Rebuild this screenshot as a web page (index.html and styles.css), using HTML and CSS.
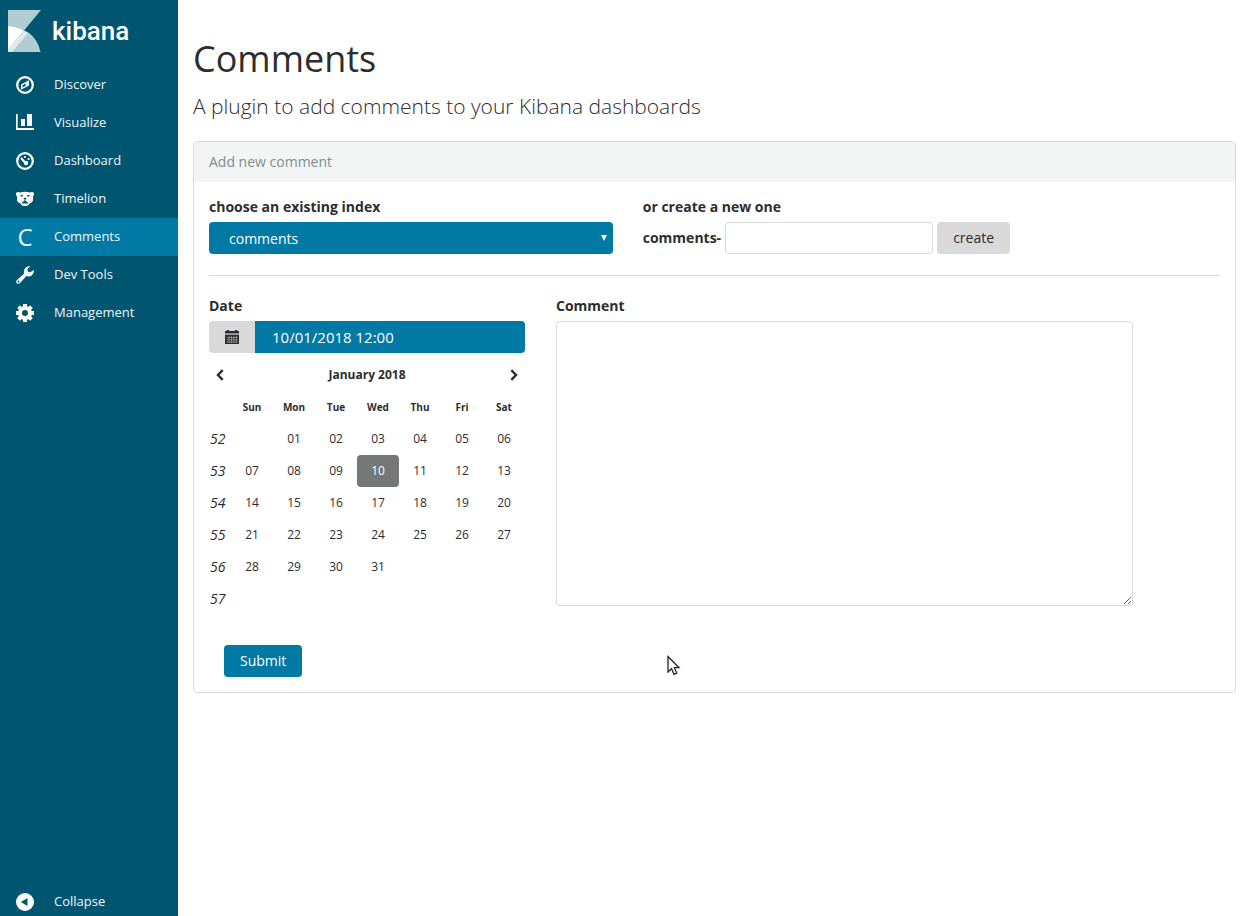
FILE: index.html
```html
<!DOCTYPE html>
<html lang="en">
<head>
<meta charset="utf-8">
<title>Comments - Kibana</title>
<link rel="stylesheet" href="styles.css">
</head>
<body>
<div class="app">
  <nav class="sidebar" aria-label="Main">
    <a class="logo" href="#">
      <svg class="logo-mark" viewBox="0 0 33 42" width="33" height="42" aria-hidden="true">
        <path fill="#b2ccd4" d="M0 0H33L16 20.500Q8.500 16 0 16Z"/>
        <path fill="#b2ccd4" d="M20.500 22.500Q30 29.500 32.500 42H5Z"/>
        <path fill="#dde9ea" d="M16 20.500Q18.500 21.300 20.500 23L5 42H0V39Z"/>
        <path fill="#fff" d="M0 16Q8.500 16 16 20.500L0 39.500Z"/>
      </svg>
      <span class="logo-name">kibana</span>
    </a>
    <ul class="nav-list">
      <li><a class="nav-link" href="#">
        <svg class="nav-icon" viewBox="0 0 18 18" aria-hidden="true"><circle cx="9" cy="9" r="7.800" fill="none" stroke="#fff" stroke-width="2.200"/><path fill="#fff" fill-rule="evenodd" d="M13 4.200v5.200L5 13.800V8.600ZM9.600 7.400 6.600 9.300v2.200l3-1.700Z"/></svg>
        <span class="nav-text">Discover</span></a></li>
      <li><a class="nav-link" href="#">
        <svg class="nav-icon" viewBox="0 0 18 18" aria-hidden="true"><path fill="#fff" d="M0 0h1.700v14H18v2H0ZM5 5h4v7H5ZM11 0h5v12H11Z"/></svg>
        <span class="nav-text">Visualize</span></a></li>
      <li><a class="nav-link" href="#">
        <svg class="nav-icon" viewBox="0 0 18 18" aria-hidden="true"><circle cx="9" cy="9" r="7.800" fill="none" stroke="#fff" stroke-width="2.200"/><path stroke="#fff" stroke-width="2" d="m5 6 4.500 5"/><circle cx="10" cy="11" r="2.200" fill="#fff"/><circle cx="9" cy="5" r="1" fill="#fff"/><circle cx="12.600" cy="7" r="1.100" fill="#fff"/></svg>
        <span class="nav-text">Dashboard</span></a></li>
      <li><a class="nav-link" href="#">
        <svg class="nav-icon" viewBox="0 0 18 18" aria-hidden="true"><path fill="#fff" d="M0 3Q1.500 1.500 4 2.400Q9 1.200 14 2.400Q16.500 1.500 18 3Q18.300 5.200 17 6.500V10.500Q16.500 12.700 13.500 13.500Q12.500 16 9 16T4.500 13.500Q1.500 12.700 1 10.500V6.500Q-.3 5.200 0 3Z"/><path fill="#005571" d="M4.500 5h2.300v1.400H4.500ZM11.200 5h2.300v1.400H11.200ZM7.300 7.800h3.400L9.500 9.600v1.200L12 12.500v1H6v-1l2.500-1.700V9.600Z"/></svg>
        <span class="nav-text">Timelion</span></a></li>
      <li><a class="nav-link active" href="#" aria-current="page">
        <span class="nav-icon nav-letter" aria-hidden="true">C</span>
        <span class="nav-text">Comments</span></a></li>
      <li><a class="nav-link" href="#">
        <svg class="nav-icon" viewBox="0 0 18 18" aria-hidden="true"><path fill="#fff" fill-rule="evenodd" d="M14.500.4 11.600 2.500v2.800L14 6.400l3.700-2.300Q18.300 7.300 16 9.200T10.400 10L4 17Q2.300 18.500.8 17.200T1 14L8 7.700Q7.300 4.200 9.300 2T14.500.4ZM2.500 14.600a.9.900 0 1 0 .1 0Z"/></svg>
        <span class="nav-text">Dev Tools</span></a></li>
      <li><a class="nav-link" href="#">
        <svg class="nav-icon" viewBox="0 0 18 18" aria-hidden="true"><circle cx="9" cy="9" r="5" fill="none" stroke="#fff" stroke-width="4"/><path stroke="#fff" stroke-width="4" d="M9 0v4M9 14v4M0 9h4M14 9h4M2.600 2.600l3 3M12.400 12.400l3 3M2.600 15.400l3-3M12.400 5.600l3-3"/></svg>
        <span class="nav-text">Management</span></a></li>
    </ul>
    <button class="nav-link collapse" type="button">
      <svg class="nav-icon" viewBox="0 0 18 18" aria-hidden="true"><circle cx="9" cy="9" r="9" fill="#fff"/><path fill="#005571" d="M4.800 9 11.500 5v8Z"/></svg>
      <span class="nav-text">Collapse</span>
    </button>
  </nav>

  <main class="content">
    <h1 class="title">Comments</h1>
    <p class="subtitle">A plugin to add comments to your Kibana dashboards</p>

    <section class="panel">
      <h2 class="panel-heading">Add new comment</h2>
      <form class="panel-body">
        <div class="row">
          <div class="col-5">
            <label class="label" for="index">choose an existing index</label>
            <div class="select-wrap">
              <select class="select" id="index"><option>comments</option></select>
              <svg class="select-arrow" viewBox="0 0 6 6" aria-hidden="true"><path fill="#fff" d="M0 0h6L3 6Z"/></svg>
            </div>
          </div>
          <div class="col-7">
            <span class="label">or create a new one</span>
            <div class="create-row">
              <label class="prefix" for="new-index">comments-</label>
              <input class="text-input" id="new-index" type="text">
              <button class="button button-plain" type="button">create</button>
            </div>
          </div>
        </div>
        <hr class="divider">
        <div class="row">
          <div class="col-4">
            <label class="label" for="date">Date</label>
            <div class="date-group">
              <button class="date-toggle" type="button" aria-label="Toggle calendar">
                <svg viewBox="0 0 14 14" width="14" height="14" aria-hidden="true"><path fill="#2d2d2d" d="M0 1h2V0h2v1h6V0h2v1h2V3.500H0ZM0 5h14v9H0Z"/><path fill="#9a9aa2" d="M0 3.500h14V5H0Z"/><path stroke="#b4b4b4" stroke-width=".6" d="M1.500 7.500h11M1.500 9.700h11M1.500 12h11M4 6v7M6.500 6v7M9 6v7M11.500 6v7"/></svg>
              </button>
              <input class="date-input" id="date" type="text" value="10/01/2018 12:00">
            </div>
            <div class="calendar">
              <div class="calendar-head">
                <button class="month-step" type="button" aria-label="Previous month"><svg viewBox="0 0 8 12" width="8" height="12" aria-hidden="true"><path fill="none" stroke="#2d2d2d" stroke-width="2.400" d="M6.700 1.200 2 6l4.700 4.800"/></svg></button>
                <strong>January 2018</strong>
                <button class="month-step" type="button" aria-label="Next month"><svg viewBox="0 0 8 12" width="8" height="12" aria-hidden="true"><path fill="none" stroke="#2d2d2d" stroke-width="2.400" d="M1.300 1.200 6 6l-4.700 4.800"/></svg></button>
              </div>
              <table class="days">
                <thead><tr><td></td><th>Sun</th><th>Mon</th><th>Tue</th><th>Wed</th><th>Thu</th><th>Fri</th><th>Sat</th></tr></thead>
                <tbody>
                  <tr><td class="week">52</td><td></td><td><button class="day" type="button">01</button></td><td><button class="day" type="button">02</button></td><td><button class="day" type="button">03</button></td><td><button class="day" type="button">04</button></td><td><button class="day" type="button">05</button></td><td><button class="day" type="button">06</button></td></tr>
                  <tr><td class="week">53</td><td><button class="day" type="button">07</button></td><td><button class="day" type="button">08</button></td><td><button class="day" type="button">09</button></td><td><button class="day selected" type="button">10</button></td><td><button class="day" type="button">11</button></td><td><button class="day" type="button">12</button></td><td><button class="day" type="button">13</button></td></tr>
                  <tr><td class="week">54</td><td><button class="day" type="button">14</button></td><td><button class="day" type="button">15</button></td><td><button class="day" type="button">16</button></td><td><button class="day" type="button">17</button></td><td><button class="day" type="button">18</button></td><td><button class="day" type="button">19</button></td><td><button class="day" type="button">20</button></td></tr>
                  <tr><td class="week">55</td><td><button class="day" type="button">21</button></td><td><button class="day" type="button">22</button></td><td><button class="day" type="button">23</button></td><td><button class="day" type="button">24</button></td><td><button class="day" type="button">25</button></td><td><button class="day" type="button">26</button></td><td><button class="day" type="button">27</button></td></tr>
                  <tr><td class="week">56</td><td><button class="day" type="button">28</button></td><td><button class="day" type="button">29</button></td><td><button class="day" type="button">30</button></td><td><button class="day" type="button">31</button></td><td></td><td></td><td></td></tr>
                  <tr><td class="week">57</td><td></td><td></td><td></td><td></td><td></td><td></td><td></td></tr>
                </tbody>
              </table>
            </div>
          </div>
          <div class="col-7">
            <label class="label" for="comment">Comment</label>
            <textarea class="comment" id="comment"></textarea>
          </div>
        </div>
        <div class="actions"><button class="button button-primary" type="button">Submit</button></div>
      </form>
    </section>
  </main>
</div>
<svg class="pointer" viewBox="0 0 14 21" width="14" height="21" aria-hidden="true"><path fill="#fff" stroke="#20262d" stroke-width="1.300" d="M1 1.500V17l3.600-3.300L7 19.300l2.800-1.200-2.400-5.400H12Z"/></svg>
</body>
</html>
```

FILE: styles.css
```css
* { box-sizing: border-box; }

body {
  margin: 0;
  font-family: "Open Sans", "Noto Sans", sans-serif;
  font-size: 14px;
  line-height: 20px;
  color: #2d2d2d;
  background: #fff;
}

button, input, select, textarea { font: inherit; color: inherit; }
button { cursor: pointer; }

.app { display: flex; min-height: 100vh; }

/* Sidebar */
.sidebar {
  display: flex;
  flex-direction: column;
  flex: 0 0 178px;
  background: #005571;
  color: #fff;
}
.logo {
  display: flex;
  align-items: center;
  gap: 11px;
  height: 66px;
  padding: 0 8px 4px;
  color: #fff;
  text-decoration: none;
}
.logo-name {
  font-family: Roboto, "Open Sans", sans-serif;
  font-size: 26px;
  font-weight: 500;
  line-height: 32px;
}
.nav-list { margin: 0; padding: 0; list-style: none; }
.nav-link {
  display: flex;
  align-items: center;
  gap: 20px;
  width: 100%;
  height: 38px;
  padding: 0 16px;
  border: 0;
  background: none;
  font-size: 13px;
  color: #f0f5f7;
  text-align: left;
  text-decoration: none;
}
.nav-link.active { background: #0079a5; }
.nav-icon { flex: none; width: 18px; height: 18px; }
.nav-letter { font-size: 24px; line-height: 18px; text-align: center; }
.nav-text { padding-bottom: 2px; }
.collapse { height: 28px; margin-top: auto; }

/* Page */
.content { flex: 1; min-width: 0; padding: 39px 18px 20px 15px; }
.title { margin: 0; font-size: 36px; font-weight: 400; line-height: 40px; }
.subtitle { margin: 13px 0 20px; font-size: 21px; font-weight: 300; line-height: 29px; }

.panel { border: 1px solid #d9d9d9; border-radius: 4px; }
.panel-heading {
  margin: 0;
  padding: 10px 15px;
  background: #f3f5f5;
  border-radius: 3px 3px 0 0;
  font-size: 14px;
  font-weight: 400;
  color: #7b8e8e;
}
.panel-body { padding: 15px; }

.row { display: flex; margin: 0 -15px; }
.col-4, .col-5, .col-7 { padding: 0 15px; }
.col-4 { width: 33.333%; }
.col-5 { width: 41.667%; }
.col-7 { width: 58.333%; }

.label { display: block; margin-bottom: 5px; font-weight: 700; }
.divider { margin: 21px 0 20px; border: 0; border-top: 1px solid #d9d9d9; }

/* Controls */
.select-wrap { position: relative; }
.select {
  display: block;
  width: 100%;
  height: 32px;
  padding: 1px 20px 0;
  border: 0;
  border-radius: 4px;
  background: #0079a5;
  color: #fff;
  appearance: none;
}
.select-arrow {
  position: absolute;
  top: 13px;
  right: 6px;
  width: 6px;
  height: 6px;
  pointer-events: none;
}
.create-row { display: flex; align-items: center; gap: 4px; }
.prefix { font-weight: 700; }
.text-input {
  width: 208px;
  height: 32px;
  padding: 5px 15px;
  border: 1px solid #d9d9d9;
  border-radius: 4px;
  background: #fff;
}
.button { height: 32px; padding: 0 16px; border: 0; border-radius: 4px; }
.button-plain { background: #d9d9d9; }
.button-primary { background: #0079a5; color: #fff; }
.actions { padding: 30px 15px 0; }

.date-group,
.calendar { max-width: 316px; }
.date-group { display: flex; height: 32px; border-radius: 4px; overflow: hidden; }
.date-toggle {
  display: flex;
  align-items: center;
  justify-content: center;
  flex: 0 0 46px;
  padding: 0;
  border: 0;
  background: #d9d9d9;
}
.date-input {
  flex: 1;
  min-width: 0;
  padding: 0 17px;
  border: 0;
  background: #0079a5;
  color: #fff;
  font-size: 15px;
}

.comment {
  display: block;
  width: 100%;
  height: 285px;
  padding: 5px 15px;
  border: 1px solid #d9d9d9;
  border-radius: 4px;
  background: #fff;
  resize: both;
}

/* Calendar */
.calendar { padding-top: 6px; }
.calendar-head {
  display: flex;
  align-items: center;
  justify-content: space-between;
  height: 32px;
  font-size: 12px;
}
.month-step { display: flex; padding: 0 7px; border: 0; background: none; }
.days { width: 100%; border-collapse: collapse; table-layout: fixed; }
.days th, .days td { height: 32px; padding: 0; text-align: center; }
.days th { font-size: 10px; }
.days td:first-child { width: 22px; }
.days .week { padding-left: 1px; font-style: italic; text-align: left; }
.day {
  display: block;
  width: 100%;
  height: 32px;
  padding: 0;
  border: 0;
  border-radius: 4px;
  background: none;
  font-size: 12px;
}
.day.selected { background: #757778; color: #fff; }

.pointer { position: absolute; left: 667px; top: 655px; pointer-events: none; }
```
